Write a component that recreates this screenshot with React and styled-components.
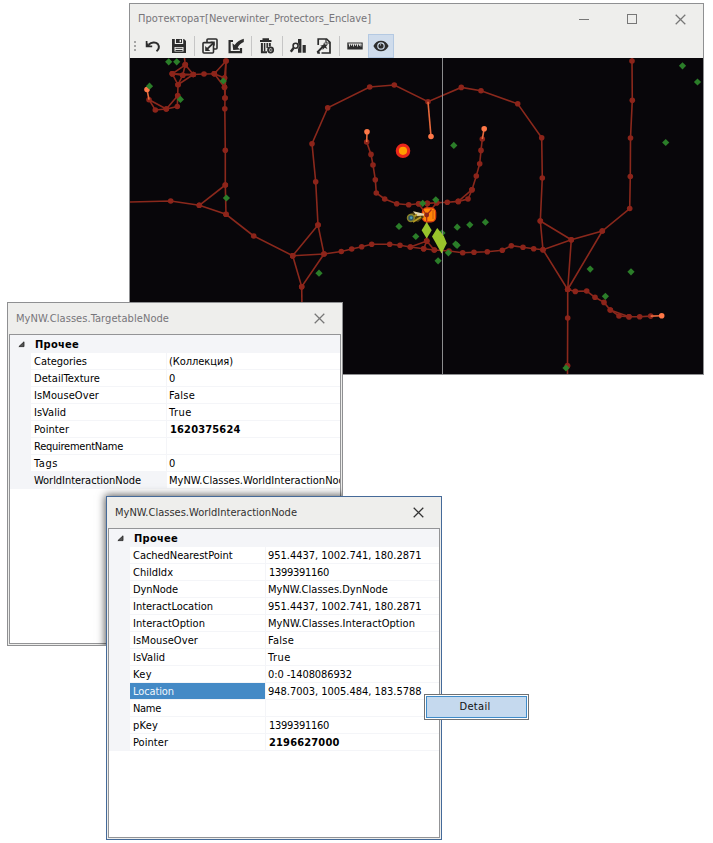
import React, { useLayoutEffect, useRef, useState } from "react";
import styled, { createGlobalStyle } from "styled-components";

const GlobalStyle = createGlobalStyle`
  * { box-sizing: border-box; }
  body {
    margin: 0;
    background: #fff;
    font-family: "DejaVu Sans Condensed", "DejaVu Sans", sans-serif;
    font-stretch: condensed;
    font-size: 11px;
    color: #000;
  }
`;

const Desktop = styled.main`
  position: relative;
  width: 713px;
  height: 843px;
  overflow: hidden;
  background: #fff;
`;

const Window = styled.section`
  position: absolute;
  left: ${(p) => p.$x}px;
  top: ${(p) => p.$y}px;
  width: ${(p) => p.$w}px;
  height: ${(p) => p.$h}px;
  display: flex;
  flex-direction: column;
  overflow: hidden;
  background: #eeeeec;
  border: 1px solid ${(p) => (p.$active ? "#456a99" : "#8f9092")};
`;

const TitleBar = styled.header`
  display: flex;
  flex: none;
  align-items: center;
  justify-content: space-between;
  height: ${(p) => p.$height}px;
  padding: 0 ${(p) => p.$right}px 0 8px;
  color: ${(p) => (p.$active ? "#32302f" : "#77757a")};
`;

const Controls = styled.div`
  display: flex;
  gap: 38px;
  margin-bottom: ${(p) => (p.$low ? -1 : 0)}px;
  color: ${(p) => (p.$active ? "#333" : "#777")};
`;

const Glyph = styled.svg`
  display: block;
  flex: none;
  overflow: visible;
`;

const Label = styled.span`
  display: inline-block;
  white-space: pre;
  line-height: 18px;
  font-weight: ${(p) => (p.$bold ? 700 : 400)};
`;

/* A label tracked so that its advance width equals `width`. */
function Text({ children, width, bold }) {
  const ref = useRef(null);
  const [spacing, setSpacing] = useState(0);
  useLayoutEffect(() => {
    const natural = ref.current.getBoundingClientRect().width;
    setSpacing((width - natural) / children.length);
  }, [children, width]);
  return (
    <Label ref={ref} $bold={bold} style={{ letterSpacing: spacing }}>
      {children}
    </Label>
  );
}

const CloseIcon = () => (
  <Glyph width="11" height="11" viewBox="0 0 11 11">
    <path d="M.7.7 10.3 10.3M10.3.7.7 10.3" stroke="currentColor" strokeWidth="1.25" fill="none" />
  </Glyph>
);

/* ---------- property grid ---------- */

const GridFrame = styled.div`
  flex: 1;
  margin: 0 1px 1px;
  border: 1px solid #939496;
  background: #fff;
  overflow: hidden;
`;

const GroupRow = styled.div`
  display: flex;
  align-items: center;
  height: 18px;
  padding: 1px 0 0 8px;
  gap: 10px;
  background: #f4f5f8;
`;

const PropertyRow = styled.div`
  display: grid;
  grid-template-columns: 21px 135px 1fr;
  height: 17px;
  background: #f4f5f8;
`;

const NameCell = styled.div`
  display: flex;
  grid-column: 2;
  height: 16px;
  padding-left: 3px;
  overflow: hidden;
  color: ${(p) => (p.$state === "selected" ? "#f0f6fc" : "#000")};
  background: ${(p) => (p.$state === "selected" ? "#448ac6" : p.$state === "shaded" ? "#f4f5f8" : "#fff")};
`;

const ValueCell = styled.div`
  display: flex;
  height: 16px;
  margin-left: 1px;
  padding-left: ${(p) => (p.$inset ? 3 : 2)}px;
  overflow: hidden;
  background: #fff;
`;

function PropertyWindow({ x, y, title, titleWidth, active, rows, children }) {
  return (
    <Window $x={x} $y={y} $w={336} $h={344} $active={active}>
      <TitleBar $height={31} $right={17} $active={active}>
        <Text width={titleWidth}>{title}</Text>
        <Controls $active={active}>
          <CloseIcon />
        </Controls>
      </TitleBar>
      <GridFrame>
        <GroupRow>
          <Glyph width="7" height="7" viewBox="0 0 7 7">
            <path d="M6 .8V5.6H.9Z" fill="#555" stroke="#222" strokeWidth=".8" />
          </Glyph>
          <Text bold width={44}>Прочее</Text>
        </GroupRow>
        {rows.map(([name, nameWidth, value, valueWidth, opts = {}]) => (
          <PropertyRow key={name}>
            <NameCell $state={opts.state}>
              <Text width={nameWidth}>{name}</Text>
            </NameCell>
            <ValueCell $inset={opts.inset}>
              {value && <Text width={valueWidth} bold={opts.bold}>{value}</Text>}
            </ValueCell>
          </PropertyRow>
        ))}
      </GridFrame>
      {children}
    </Window>
  );
}

const targetRows = [
  ["Categories", 53, "(Коллекция)", 64],
  ["DetailTexture", 66, "0", 7],
  ["IsMouseOver", 65, "False", 26],
  ["IsValid", 32, "True", 23],
  ["Pointer", 35, "1620375624", 70.5, { bold: true, inset: true }],
  ["RequirementName", 89, "", 0],
  ["Tags", 24, "0", 7],
  ["WorldInteractionNode", 107, "MyNW.Classes.WorldInteractionNode", 182, { state: "shaded" }],
];

const worldRows = [
  ["CachedNearestPoint", 99.5, "951.4437, 1002.741, 180.2871", 153.5],
  ["ChildIdx", 40, "1399391160", 60, { inset: true }],
  ["DynNode", 45, "MyNW.Classes.DynNode", 120],
  ["InteractLocation", 80, "951.4437, 1002.741, 180.2871", 153.5],
  ["InteractOption", 72, "MyNW.Classes.InteractOption", 147],
  ["IsMouseOver", 65, "False", 26],
  ["IsValid", 32, "True", 23],
  ["Key", 19, "0:0 -1408086932", 84],
  ["Location", 41, "948.7003, 1005.484, 183.5788", 153.5, { state: "selected" }],
  ["Name", 28, "", 0],
  ["pKey", 25, "1399391160", 60, { inset: true }],
  ["Pointer", 35, "2196627000", 70.5, { bold: true, inset: true }],
];

/* Shadow that the front window casts on the one behind it. */
const CastShadow = styled.div`
  position: absolute;
  left: 98px;
  top: 193px;
  width: 336px;
  height: 344px;
  box-shadow: 0 0 8px 1px rgba(0, 0, 0, 0.65);
`;

/* ---------- toolbar ---------- */

const Toolbar = styled.div`
  display: flex;
  flex: none;
  align-items: center;
  height: 24px;
  padding-left: 4px;
`;

const Grip = styled.div`
  width: 2px;
  height: 11px;
  margin-right: 4px;
  background: repeating-linear-gradient(#a5a5a5 0 2px, transparent 2px 4px);
`;

const ToolButton = styled.button`
  display: flex;
  align-items: center;
  justify-content: center;
  width: 26px;
  height: 24px;
  padding: 0;
  color: #2d2d2d;
  border: 1px solid ${(p) => (p.$pressed ? "#b4c9e2" : "transparent")};
  background: ${(p) => (p.$pressed ? "#cfdcec" : "transparent")};
`;

const Separator = styled.div`
  width: 1px;
  height: 20px;
  margin: 0 2px;
  background: #c6c6c6;
`;

const Icon = ({ children }) => (
  <Glyph width="16" height="16" viewBox="0 0 16 16" fill="none" stroke="currentColor" strokeWidth="2">
    {children}
  </Glyph>
);

const UndoIcon = () => (
  <Icon>
    <path d="M3.5 6.8C6.5 4 10.5 3.6 12.8 6 14.8 8.6 13.8 11.6 11.5 13.2" strokeWidth="2" />
    <path d="M1.6 3V8.4H7.2" strokeWidth="1.7" />
    <path d="M1.6 4.6V8.4H5.4Z" fill="currentColor" stroke="none" />
  </Icon>
);
const SaveIcon = () => (
  <Icon>
    <path fillRule="evenodd" d="M1 1H3.8V6H12.2V1H13L15 3V15H1ZM3.5 9V13.5H12.5V9Z" fill="currentColor" stroke="none" />
    <path d="M5 1H11V5H5ZM8.6 1.8V4.2H10V1.8Z" fillRule="evenodd" fill="currentColor" stroke="none" />
    <path d="M4.5 10.3H11.5M4.5 12.5H11.5" strokeWidth="1" />
  </Icon>
);
const CopyIcon = () => (
  <Icon>
    <path d="M5 4V1.8Q5 1 6 1H14Q15 1 15 2V10Q15 11 14 11H12" strokeWidth="1.6" />
    <rect x="1" y="4.6" width="10.5" height="10.4" rx="1" strokeWidth="1.6" />
    <path d="M4.5 11.7 11 5.3" strokeWidth="1.8" />
    <path d="M3.2 8V13H8.2ZM8.3 3.6H12.8V8.1Z" fill="currentColor" stroke="none" />
  </Icon>
);
const ImportIcon = () => (
  <Icon>
    <path d="M5 3H1.6V14.2H13V10" strokeWidth="2.2" />
    <path d="M4.4 5.2 6.6 6.9C9 3.6 12 1.8 15.8.8V4C13 5.2 11 7 9.7 9.4L12 11.4 5.2 12Z" fill="currentColor" stroke="none" />
  </Icon>
);
const TrashIcon = () => (
  <Icon>
    <path d="M1 3H12.5M4.5 2V1.2H9V2" strokeWidth="2" />
    <path d="M2.9 5V14.2H8M10.8 5V8.5" strokeWidth="2" />
    <path d="M5.6 5V13.5M8.2 5V10" strokeWidth="1.5" />
    <circle cx="11.6" cy="12" r="2.6" strokeWidth="1.7" />
    <path d="M10.3 10.7 12.9 13.3M12.9 10.7 10.3 13.3" strokeWidth="1" />
  </Icon>
);
const AnalyzeIcon = () => (
  <Icon>
    <path d="M8 1H11.4V14.8H8V11L9.4 8 8 5ZM12.6 7H15.8V14.8H12.6Z" fill="currentColor" stroke="none" />
    <circle cx="5.6" cy="7.8" r="2.5" strokeWidth="1.6" />
    <path d="M3.6 10 .8 13.8" strokeWidth="2.4" />
  </Icon>
);
const WandIcon = () => (
  <Icon>
    <path d="M2.2 7V1H10.6L14 4.4V15H5.5M2.2 13V15H4" strokeWidth="1.7" />
    <path d="M10 1V5H14" strokeWidth="1.2" />
    <path d="M1.2 14.5 7.5 8" strokeWidth="1.8" />
    <path d="M8.2 4 9 6.5 12 6.2 10 8.4 11.5 11 8.6 9.8 6.6 12 6.8 9 4.1 7.7 7.2 7Z" fill="currentColor" stroke="none" />
  </Icon>
);
const RulerIcon = () => (
  <Icon>
    <path d="M.3 4.5H15.7V11.5H.3Z" fill="currentColor" stroke="none" />
    <path d="M1.5 6H14.5" stroke="#eeeeec" strokeWidth="1" />
    <path d="M2.5 6V8.5M4.5 6V7.8M6.5 6V8.5M8.5 6V7.8M10.5 6V8.5M12.5 6V7.8M13.9 6V8.5" stroke="#eeeeec" strokeWidth=".9" />
  </Icon>
);
const EyeIcon = () => (
  <Icon>
    <path fillRule="evenodd" d="M.4 8C2 4.5 4.8 2.8 8 2.8S14 4.5 15.6 8C14 11.5 11.2 13.2 8 13.2S2 11.5.4 8ZM8 4.2A3.8 3.8 0 1 0 8 11.8 3.8 3.8 0 0 0 8 4.2Z" fill="currentColor" stroke="none" />
    <circle cx="8" cy="8" r="2.6" fill="currentColor" stroke="none" />
    <path d="M7 6.9H8" stroke="#cfdcec" strokeWidth="1" />
  </Icon>
);

/* ---------- map ---------- */

const MapCanvas = styled.svg`
  display: block;
  flex: none;
  width: 573px;
  height: 316px;
  background: #08060a;
`;

const chains = [
  [[130, 202], [170.7, 201], [199.3, 205.3], [226, 214.3], [253.7, 236], [292.7, 255.7], [324, 254], [341.3, 251.5], [351.7, 249], [361.7, 246.7], [371.7, 244.3], [389.7, 244.3], [400, 245.3], [410.3, 247], [423.7, 248.7], [434.3, 250], [449, 251], [462.7, 252.7], [474, 252.3], [487.3, 251.7], [502.3, 250.3], [511.3, 245.7], [523, 247.3], [533.7, 248.7], [543, 249.7], [571.3, 239.7], [602.3, 231], [629.7, 208.5], [630.3, 176.5], [630.5, 138], [632.3, 100.3], [632, 61], [632, 54]],
  [[184, 54], [185.3, 64.8], [172.3, 73.8], [182.7, 75.3], [193.3, 74.5], [204, 74], [214.3, 73.7], [226, 61], [224.5, 78], [224.5, 87.3], [225, 98], [224.8, 108.8], [225.3, 150.3], [225.3, 185], [226, 214.3]],
  [[226, 61], [225, 98]],
  [[185.3, 64.8], [182.7, 75.3], [178, 84.7], [193.3, 74.5], [185.3, 64.8]],
  [[172.3, 73.8], [178, 84.7], [177.7, 95.7], [177.3, 106.5], [166.3, 109], [155.3, 110], [149, 99.7], [166.3, 109], [177.7, 95.7]],
  [[172.3, 73.8], [193.3, 74.5]],
  [[214.3, 73.7], [224.5, 78]],
  [[214.3, 73.7], [224.5, 87.3]],
  [[225.3, 185], [199.3, 205.3]],
  [[292.7, 255.7], [318, 225], [324, 254], [301.7, 286.7], [292.7, 255.7]],
  [[301.7, 286.7], [302, 310]],
  [[318, 225], [315.7, 181.7], [312, 143.7], [327.7, 107.8], [369.7, 87], [394.3, 85], [428, 101.7], [461.3, 87.4], [481, 90.7], [517.7, 103.8], [541.7, 137.8], [542.3, 178], [540.3, 221], [543, 249.7], [567.7, 289.5], [567.7, 318], [567.5, 365.8]],
  [[567.5, 365.8], [567.5, 380]],
  [[540.3, 221], [571.3, 239.7], [567.7, 289.5], [602.3, 231]],
  [[567.7, 289.5], [575.3, 291.4], [586.7, 291], [595, 297.3], [604, 302.4], [610.3, 310], [619, 316], [629, 316.7], [639.7, 316.7], [650.7, 316.1]],
  [[610.3, 310], [629, 316.7]],
  [[366.7, 142], [371, 154.4], [373, 165], [375.3, 179.7], [376.3, 193], [384.7, 199], [396.7, 203.8], [408.7, 204.7], [418.7, 203.8], [427.3, 203.4], [436.7, 202.8], [447.3, 202.3], [458.3, 201.4], [468, 199], [472, 189.7], [476.3, 176], [479.7, 163.7], [481, 150.4], [482.3, 139]],
  [[458.3, 201.4], [472, 189.7]],
  [[410.3, 247], [426.7, 241], [423.7, 248.7]],
  [[426.7, 241], [434.3, 250]],
  [[426.7, 241], [426.7, 215], [418.7, 203.8]],
  [[427.3, 203.4], [426.7, 215], [436.7, 202.8]],
];

const hotLinks = [
  [[149, 99.7], [147, 89.5]],
  [[366.7, 142], [367, 131.8]],
  [[428, 101.7], [431, 136.5]],
  [[482.3, 139], [484.2, 128.7]],
  [[650.7, 316.1], [661.7, 315.8]],
];

const gems = [
  [168.7, 61.8], [176.7, 61.8], [149.5, 86.2], [180.4, 99.4], [223.3, 81], [226.4, 198], [319, 273.2], [453.8, 145.4],
  [422.7, 203.3], [435.8, 199.8], [399, 226.4], [415.8, 236.5], [442, 233], [457.2, 227.2], [469.8, 224.8], [485.4, 222.2],
  [455.7, 244.1], [457.1, 245.3], [448.4, 252.8], [438.1, 260.8], [682.5, 65.8], [697.5, 82], [665.7, 142.5],
  [590.2, 269.1], [631, 271.8], [605.4, 296.3], [566, 368],
];

const toPoints = (pts) => pts.map((p) => p.join(",")).join(" ");

function WorldMap() {
  return (
    <MapCanvas viewBox="130 58 573 316">
      <g fill="none" stroke="#8a281c" strokeWidth="1.6">
        {chains.map((pts, i) => (
          <polyline key={i} points={toPoints(pts)} />
        ))}
      </g>
      <g fill="#8c241a">
        {chains.flat().map(([x, y], i) => (
          <circle key={i} cx={x} cy={y} r={x <= 130 || y > 370 || y < 58 ? 0 : 2.8} />
        ))}
      </g>
      {hotLinks.map(([a, b], i) => (
        <g key={i} fill="#ff7848" stroke="#e8693c" strokeWidth="1.6">
          <polyline points={toPoints([a, b])} />
          <circle cx={b[0]} cy={b[1]} r="2.8" stroke="none" />
        </g>
      ))}
      <g fill="#2b7d29">
        {gems.map(([x, y], i) => (
          <path key={i} d={`M${x} ${y - 3.6}l3.6 3.6-3.6 3.6-3.6-3.6Z`} />
        ))}
      </g>
      <circle cx="403" cy="150.8" r="5.7" fill="#ff9d00" stroke="#e9261b" strokeWidth="3.2" />
      <rect x="422.3" y="207.8" width="13.4" height="14" rx="4.5" fill="#ff8508" stroke="#d63c12" strokeWidth="1.2" />
      <path d="M433 210v9" stroke="#c85a0c" strokeWidth="1" />
      <path d="M423 210 426.7 215 431.5 209.5M426.7 215V221" stroke="#a82c18" strokeWidth="1.2" fill="none" />
      <circle cx="426.7" cy="215" r="2.4" fill="#8c241a" />
      <path d="M410 214 415 211.5 420 213 424 217 418 222 411 220Z" fill="#4a3d10" />
      <path d="M413 211.3 424 213.7V215.6L417 216Z" fill="#e4d6b0" />
      <path d="M408.5 220.5 417 214.5M413 222 421 217" stroke="#b79a22" strokeWidth="1.7" />
      <circle cx="410.9" cy="218" r="3.4" fill="#315768" stroke="#8a8228" strokeWidth="1.5" />
      <circle cx="411.2" cy="217.7" r="1.2" fill="#4ba6ba" />
      <path d="M442.5 58V374" stroke="#8c8c8e" strokeWidth="1" />
      <path d="M426.7 222 431.7 230.3 426.7 238.4 421.6 230.3Z" fill="#99c42b" />
      <path d="M437.2 228 443.8 236 446.8 243.2 441.6 253.5 435.2 242 432 236.6Z" fill="#99c42b" />
    </MapCanvas>
  );
}

/* ---------- popup ---------- */

const Popup = styled.div`
  position: absolute;
  left: 424px;
  top: 694px;
  display: flex;
  width: 105px;
  height: 26px;
  padding: 1px;
  border: 1px solid #707173;
  background: #fff;
`;

const PopupButton = styled.button`
  flex: 1;
  padding: 0 3px 0 0;
  border: 1px solid #3f8bc8;
  background: #c5d9ee;
  color: #111;
  font: inherit;
  font-stretch: condensed;
`;

export default function App() {
  return (
    <Desktop>
      <GlobalStyle />
      <Window $x={129} $y={3} $w={575} $h={372}>
        <TitleBar $height={30} $right={17}>
          <Text width={233}>Протекторат[Neverwinter_Protectors_Enclave]</Text>
          <Controls $low>
            <Glyph width="10" height="11" viewBox="0 0 10 11">
              <path d="M0 5.5H10" stroke="currentColor" />
            </Glyph>
            <Glyph width="10" height="11" viewBox="0 0 10 11">
              <rect x=".5" y=".5" width="9" height="9" fill="none" stroke="currentColor" />
            </Glyph>
            <CloseIcon />
          </Controls>
        </TitleBar>
        <Toolbar>
          <Grip />
          <ToolButton><UndoIcon /></ToolButton>
          <ToolButton><SaveIcon /></ToolButton>
          <Separator />
          <ToolButton><CopyIcon /></ToolButton>
          <ToolButton><ImportIcon /></ToolButton>
          <Separator />
          <ToolButton><TrashIcon /></ToolButton>
          <Separator />
          <ToolButton><AnalyzeIcon /></ToolButton>
          <ToolButton><WandIcon /></ToolButton>
          <Separator />
          <ToolButton><RulerIcon /></ToolButton>
          <ToolButton $pressed><EyeIcon /></ToolButton>
        </Toolbar>
        <WorldMap />
      </Window>

      <PropertyWindow x={7} y={302} title="MyNW.Classes.TargetableNode" titleWidth={153} rows={targetRows}>
        <CastShadow />
      </PropertyWindow>

      <PropertyWindow x={106} y={496} title="MyNW.Classes.WorldInteractionNode" titleWidth={182} active rows={worldRows} />

      <Popup>
        <PopupButton><Text width={31}>Detail</Text></PopupButton>
      </Popup>
    </Desktop>
  );
}
